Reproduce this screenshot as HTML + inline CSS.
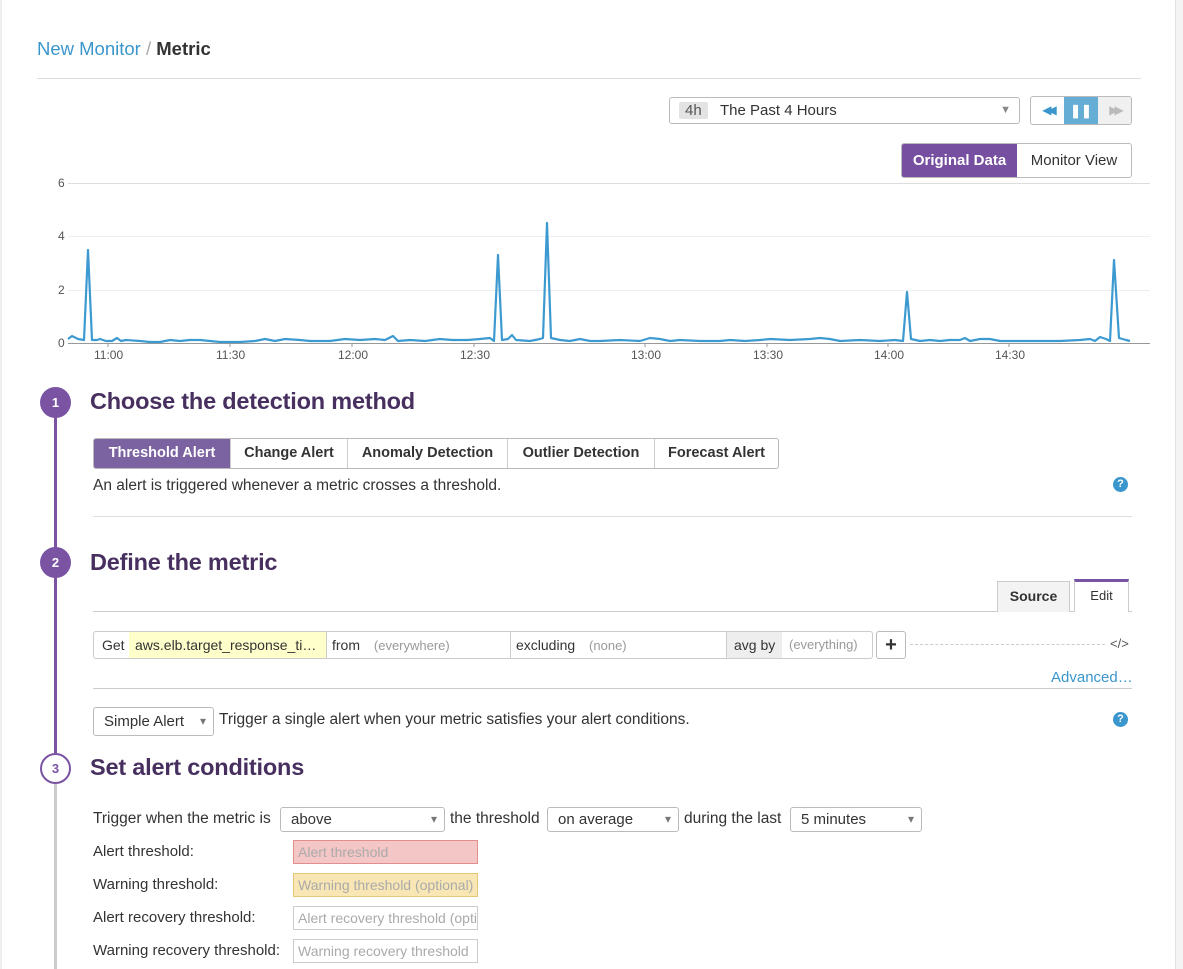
<!DOCTYPE html>
<html><head><meta charset="utf-8"><style>
*{box-sizing:border-box;margin:0;padding:0}
body{width:1183px;height:969px;overflow:hidden;background:#fff;font-family:"Liberation Sans",sans-serif;color:#333;position:relative;font-size:14px}
.a{position:absolute}
.rb{position:absolute;left:1175px;top:0;width:8px;height:969px;background:#f4f4f4;border-left:1px solid #e2e2e2}
.lb{position:absolute;left:0;top:0;width:2px;height:969px;background:#efefef}
.hr{position:absolute;height:1px;background:#ddd}
.h{position:absolute;font-size:23.5px;font-weight:bold;color:#47305f;letter-spacing:-0.2px}
.circ{position:absolute;width:31px;height:31px;border-radius:50%;background:#7a53a3;color:#fff;font-size:13px;font-weight:bold;text-align:center;line-height:31px}
.tabs{position:absolute;display:flex;border:1px solid #bbb;border-radius:3px;overflow:hidden;height:31px}
.tabs div{line-height:29px;font-weight:bold;font-size:14.5px;border-left:1px solid #ccc;color:#333;text-align:center}
.tabs div:first-child{border-left:none;background:#7b62a0;color:#fff}
.sel{position:absolute;border:1px solid #bbb;border-radius:3px;height:25px;line-height:23px;padding-left:10px;font-size:15px;background:#fff}
.sel:after{content:"▾";position:absolute;right:7px;top:0;color:#777;font-size:12px}
.lbl{position:absolute;font-size:15px;color:#333}
.inp{position:absolute;left:293px;width:185px;height:24px;border:1px solid #ccc;font-size:14px;color:#aaa;padding-left:4px;line-height:22px;white-space:nowrap;overflow:hidden}
.q{position:absolute;width:15px;height:15px;border-radius:50%;background:#3a96cc;color:#fff;font-size:11px;font-weight:bold;text-align:center;line-height:15px}
.yl{position:absolute;font-size:12px;color:#555;left:58px}
.xl{position:absolute;font-size:12px;color:#555;top:348px}
</style></head><body>
<div class="lb"></div><div class="rb"></div>
<div class="a" style="left:37px;top:38px;font-size:18.5px;color:#3a96cc">New Monitor <span style="color:#aaa">/</span> <b style="color:#333">Metric</b></div>
<div class="hr" style="left:37px;top:78px;width:1104px"></div>

<div class="a" style="left:669px;top:97px;width:351px;height:27px;border:1px solid #bbb;border-radius:3px;font-size:15px;line-height:25px">
<span style="position:absolute;left:9px;top:4px;background:#e3e3e3;border-radius:2px;padding:0 6px;line-height:17px;color:#555">4h</span>
<span style="position:absolute;left:50px">The Past 4 Hours</span>
<span style="position:absolute;right:8px;color:#888;font-size:11px">▼</span></div>
<div class="a" style="left:1030px;top:96px;width:102px;height:29px;border:1px solid #bbb;border-radius:3px;overflow:hidden;display:flex">
<div style="width:33px;text-align:center;color:#3a96cc;font-size:12px;line-height:27px;letter-spacing:-4px">◀◀</div>
<div style="width:34px;background:#66add6;color:#fff;text-align:center;line-height:27px;font-weight:bold;font-size:13px">❚❚</div>
<div style="flex:1;background:#f0f0f0;color:#bbb;text-align:center;font-size:12px;line-height:27px;letter-spacing:-4px">▶▶</div></div>
<div class="a" style="left:901px;top:143px;width:231px;height:35px;border:1px solid #bbb;border-radius:3px;overflow:hidden;display:flex;font-size:15px">
<div style="width:115px;background:#774fa0;color:#fff;text-align:center;line-height:33px;font-weight:bold">Original Data</div>
<div style="flex:1;text-align:center;line-height:33px">Monitor View</div></div>

<div class="hr" style="left:68px;top:183px;width:1082px;background:#ddd"></div>
<div class="hr" style="left:68px;top:236px;width:1082px;background:#eee"></div>
<div class="hr" style="left:68px;top:290px;width:1082px;background:#eee"></div>
<div class="hr" style="left:68px;top:343px;width:1082px;background:#999"></div>
<div class="yl" style="top:176px">6</div><div class="yl" style="top:229px">4</div><div class="yl" style="top:283px">2</div><div class="yl" style="top:336px">0</div>
<div class="xl" style="left:94px">11:00</div><div class="xl" style="left:216px">11:30</div><div class="xl" style="left:338px">12:00</div><div class="xl" style="left:460px">12:30</div><div class="xl" style="left:631px">13:00</div><div class="xl" style="left:753px">13:30</div><div class="xl" style="left:874px">14:00</div><div class="xl" style="left:995px">14:30</div>
<svg class="a" style="left:0;top:0" width="1183" height="370">
<g stroke="#999" stroke-width="1"><line x1="108" y1="343" x2="108" y2="347"/><line x1="230" y1="343" x2="230" y2="347"/><line x1="352" y1="343" x2="352" y2="347"/><line x1="474" y1="343" x2="474" y2="347"/><line x1="645" y1="343" x2="645" y2="347"/><line x1="767" y1="343" x2="767" y2="347"/><line x1="888" y1="343" x2="888" y2="347"/><line x1="1009" y1="343" x2="1009" y2="347"/></g>
<polyline fill="none" stroke="#3d9ad0" stroke-width="2.2" stroke-linejoin="round" points="68,339 72,336 78,339 84,340 88,250 92,340 97,340 100,339 106,341 112,341 117,338 121,341 126,340 140,341 150,342 160,342 170,340 180,341 190,340 200,340 210,341 220,342 240,342 255,341 265,339 275,341 285,339 300,340 310,341 330,341 345,339 360,340 375,339 385,340 393,336 398,341 410,340 425,341 440,339 452,340 468,340 480,339 490,338 494,341 498,255 502,340 508,339 512,335 516,340 530,341 540,339 543,338 547,223 551,338 560,340 570,341 580,339 590,341 600,341 620,340 640,341 650,338 660,339 670,341 680,340 700,341 720,341 730,340 745,341 760,340 770,339 790,340 810,339 820,338 830,339 840,341 860,340 880,341 895,340 903,341 907,292 911,339 920,341 930,340 940,341 950,340 960,340 965,338 970,341 980,339 990,339 995,340 1000,341 1020,341 1040,341 1060,341 1080,340 1090,339 1095,341 1100,337 1106,339 1110,341 1114,260 1119,338 1126,340 1130,341"/>
</svg>

<div style="position:absolute;left:54px;top:402px;width:3px;height:366px;background:#7a53a3"></div>
<div style="position:absolute;left:54px;top:784px;width:3px;height:185px;background:#ccc"></div>
<div class="circ" style="left:40px;top:387px">1</div>
<div class="circ" style="left:40px;top:547px">2</div>
<div class="circ" style="left:40px;top:753px;background:#fff;border:2px solid #7a53a3;color:#7a53a3;line-height:27px">3</div>

<div class="h" style="left:90px;top:388px">Choose the detection method</div>
<div class="tabs" style="left:93px;top:438px"><div style="width:136px">Threshold Alert</div><div style="width:117px">Change Alert</div><div style="width:160px">Anomaly Detection</div><div style="width:147px">Outlier Detection</div><div style="width:124px">Forecast Alert</div></div>
<div class="lbl" style="left:93px;top:477px;font-size:15.5px">An alert is triggered whenever a metric crosses a threshold.</div>
<div class="q" style="left:1113px;top:477px">?</div>
<div class="hr" style="left:93px;top:516px;width:1039px"></div>

<div class="h" style="left:90px;top:549px">Define the metric</div>
<div class="hr" style="left:93px;top:611px;width:1039px;background:#ccc"></div>
<div class="a" style="left:997px;top:581px;width:73px;height:31px;border:1px solid #ccc;border-bottom:none;background:#f3f3f3;font-weight:bold;text-align:center;line-height:29px;font-size:14px">Source</div>
<div class="a" style="left:1074px;top:579px;width:55px;height:33px;border:1px solid #ccc;border-top:3px solid #7a53a3;border-bottom:none;background:#fff;text-align:center;line-height:28px;font-size:13px;color:#333">Edit</div>

<div class="a" style="left:93px;top:631px;width:780px;height:28px;border:1px solid #ccc;border-radius:3px;display:flex;font-size:14px;line-height:26px;overflow:hidden;white-space:nowrap">
<div style="padding-left:8px;width:35px;flex:none">Get</div>
<div style="background:#ffffcc;width:198px;flex:none;padding-left:6px;border-right:1px solid #ccc;overflow:hidden">aws.elb.target_response_ti…</div>
<div style="width:184px;flex:none;padding-left:5px;border-right:1px solid #ccc">from <span style="color:#999;margin-left:10px;font-size:13px">(everywhere)</span></div>
<div style="width:216px;flex:none;padding-left:5px;border-right:1px solid #ccc">excluding <span style="color:#999;margin-left:10px;font-size:13px">(none)</span></div>
<div style="width:55px;flex:none;background:#eee;padding-left:7px">avg by</div>
<div style="flex:1;padding-left:7px;color:#999;font-size:13px">(everything)</div></div>
<div class="a" style="left:876px;top:631px;width:30px;height:28px;border:1px solid #bbb;border-radius:3px;text-align:center;line-height:26px;font-weight:bold;font-size:20px">+</div>
<div class="a" style="left:910px;top:644px;width:195px;border-top:1px dashed #ccc"></div>
<div class="a" style="left:1110px;top:636px;font-size:13px;color:#555">&lt;/&gt;</div>
<div class="a" style="left:1051px;top:669px;font-size:15px;color:#3a96cc">Advanced…</div>
<div class="hr" style="left:93px;top:688px;width:1039px;background:#ccc"></div>

<div class="sel" style="left:93px;top:707px;width:121px;height:29px;line-height:27px">Simple Alert</div>
<div class="lbl" style="left:219px;top:711px;font-size:15.5px">Trigger a single alert when your metric satisfies your alert conditions.</div>
<div class="q" style="left:1113px;top:712px">?</div>

<div class="h" style="left:90px;top:754px">Set alert conditions</div>
<div class="lbl" style="left:93px;top:810px;font-size:15.5px">Trigger when the metric is</div>
<div class="sel" style="left:280px;top:807px;width:165px">above</div>
<div class="lbl" style="left:450px;top:810px;font-size:15.5px">the threshold</div>
<div class="sel" style="left:547px;top:807px;width:132px">on average</div>
<div class="lbl" style="left:684px;top:810px;font-size:15.5px">during the last</div>
<div class="sel" style="left:790px;top:807px;width:132px">5 minutes</div>
<div class="lbl" style="left:93px;top:843px">Alert threshold:</div>
<div class="inp" style="top:840px;background:#f5c6c6;border-color:#e08e8e">Alert threshold</div>
<div class="lbl" style="left:93px;top:876px">Warning threshold:</div>
<div class="inp" style="top:873px;background:#f8e6b4;border-color:#e5c77a">Warning threshold (optional)</div>
<div class="lbl" style="left:93px;top:909px">Alert recovery threshold:</div>
<div class="inp" style="top:906px">Alert recovery threshold (optional)</div>
<div class="lbl" style="left:93px;top:942px">Warning recovery threshold:</div>
<div class="inp" style="top:939px">Warning recovery threshold</div>
</body></html>
